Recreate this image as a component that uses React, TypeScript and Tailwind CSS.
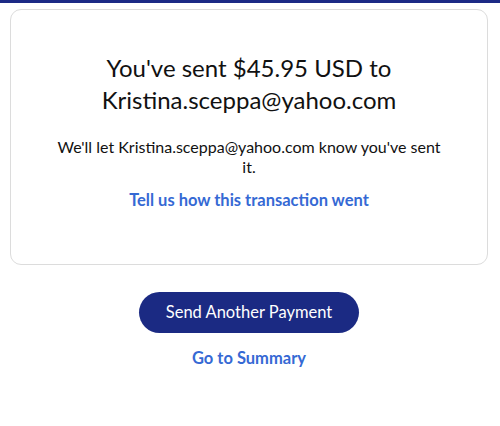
import React from 'react'

export default function App() {
  return (
    <div className="w-[500px] h-[426px] bg-white overflow-hidden" style={{ fontFamily: 'Lato, "Noto Sans", sans-serif' }}>
      {/* Top strip */}
      <div className="h-[3px] bg-[#1c2a85]" />

      <div className="px-[10px] pt-[6px]">
        {/* Confirmation card */}
        <div className="h-[256px] w-[478px] rounded-[11px] border border-[#dcdcdc] flex flex-col items-center pt-[42px]">
          <h1 className="text-[24px] leading-[32px] text-[#111] text-center font-normal w-[320px]">
            You've sent $45.95 USD to Kristina.sceppa@yahoo.com
          </h1>
          <p className="mt-[21px] text-[16px] leading-[20px] text-[#111] text-center w-[396px]">
            We'll let Kristina.sceppa@yahoo.com know you've sent it.
          </p>
          <a className="mt-[12px] text-[16.5px] leading-[22px] font-bold text-[#3569d4]">
            Tell us how this transaction went
          </a>
        </div>

        {/* Actions */}
        <div className="flex flex-col items-center mt-[27px] pr-[2px]">
          <button className="h-[41px] w-[220px] rounded-full bg-[#1b2a83] text-white text-[16.5px]">
            Send Another Payment
          </button>
          <a className="mt-[14px] text-[16.5px] leading-[22px] font-bold text-[#3569d4]">
            Go to Summary
          </a>
        </div>
      </div>
    </div>
  )
}
